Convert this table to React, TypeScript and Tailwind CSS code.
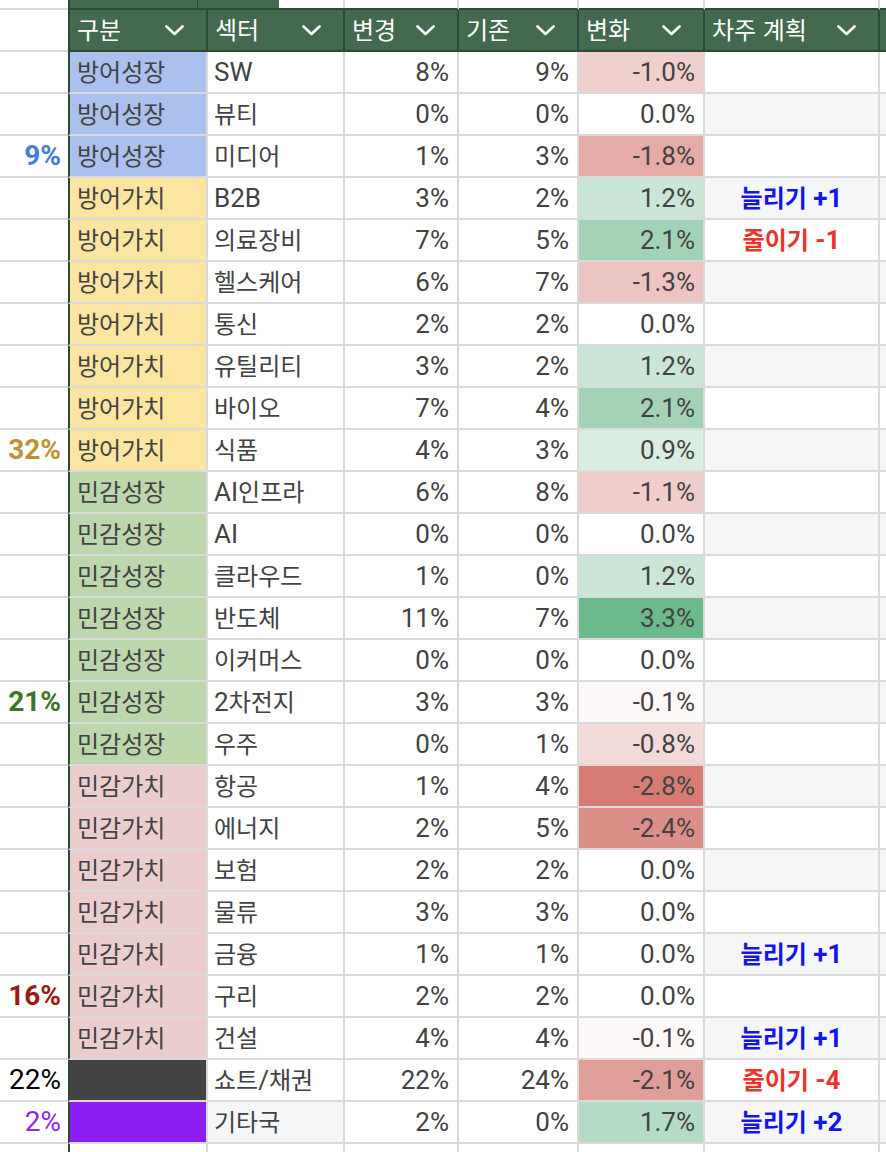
import React from "react";

type Row = {
    group: string;
    sector: string;
    now: string;
    prev: string;
    diff: string;
    diffBg: string;
    plan?: "up" | "down";
    planText?: string;
    left?: string;
    leftClass?: string;
    sectorBg?: string;
};

const GROUP_BG: Record<string, string> = {
    방어성장: "bg-[#a9c1ec]",
    방어가치: "bg-[#fce5a1]",
    민감성장: "bg-[#bcd7ac]",
    민감가치: "bg-[#eccdce]",
    short: "bg-[#434343]",
    etc: "bg-[#8b1cf2]",
};

const ROWS: Row[] = [
    { group: "방어성장", sector: "SW", now: "8%", prev: "9%", diff: "-1.0%", diffBg: "bg-[#f0d0cd]" },
    { group: "방어성장", sector: "뷰티", now: "0%", prev: "0%", diff: "0.0%", diffBg: "bg-white" },
    { group: "방어성장", sector: "미디어", now: "1%", prev: "3%", diff: "-1.8%", diffBg: "bg-[#e5aba5]", left: "9%", leftClass: "font-bold text-[#4a7bd6]" },
    { group: "방어가치", sector: "B2B", now: "3%", prev: "2%", diff: "1.2%", diffBg: "bg-[#cae6d7]", plan: "up", planText: "늘리기 +1" },
    { group: "방어가치", sector: "의료장비", now: "7%", prev: "5%", diff: "2.1%", diffBg: "bg-[#a2d3b6]", plan: "down", planText: "줄이기 -1" },
    { group: "방어가치", sector: "헬스케어", now: "6%", prev: "7%", diff: "-1.3%", diffBg: "bg-[#ecc4c1]" },
    { group: "방어가치", sector: "통신", now: "2%", prev: "2%", diff: "0.0%", diffBg: "bg-white" },
    { group: "방어가치", sector: "유틸리티", now: "3%", prev: "2%", diff: "1.2%", diffBg: "bg-[#cae6d7]" },
    { group: "방어가치", sector: "바이오", now: "7%", prev: "4%", diff: "2.1%", diffBg: "bg-[#a2d3b6]" },
    { group: "방어가치", sector: "식품", now: "4%", prev: "3%", diff: "0.9%", diffBg: "bg-[#d9ede1]", left: "32%", leftClass: "font-bold text-[#bf9131]" },
    { group: "민감성장", sector: "AI인프라", now: "6%", prev: "8%", diff: "-1.1%", diffBg: "bg-[#efcdca]" },
    { group: "민감성장", sector: "AI", now: "0%", prev: "0%", diff: "0.0%", diffBg: "bg-white" },
    { group: "민감성장", sector: "클라우드", now: "1%", prev: "0%", diff: "1.2%", diffBg: "bg-[#cae6d7]" },
    { group: "민감성장", sector: "반도체", now: "11%", prev: "7%", diff: "3.3%", diffBg: "bg-[#6cba8c]" },
    { group: "민감성장", sector: "이커머스", now: "0%", prev: "0%", diff: "0.0%", diffBg: "bg-white" },
    { group: "민감성장", sector: "2차전지", now: "3%", prev: "3%", diff: "-0.1%", diffBg: "bg-[#fdf9f9]", left: "21%", leftClass: "font-bold text-[#3f7325]" },
    { group: "민감성장", sector: "우주", now: "0%", prev: "1%", diff: "-0.8%", diffBg: "bg-[#f3dad8]" },
    { group: "민감가치", sector: "항공", now: "1%", prev: "4%", diff: "-2.8%", diffBg: "bg-[#d67c73]" },
    { group: "민감가치", sector: "에너지", now: "2%", prev: "5%", diff: "-2.4%", diffBg: "bg-[#dc8f88]" },
    { group: "민감가치", sector: "보험", now: "2%", prev: "2%", diff: "0.0%", diffBg: "bg-white" },
    { group: "민감가치", sector: "물류", now: "3%", prev: "3%", diff: "0.0%", diffBg: "bg-white" },
    { group: "민감가치", sector: "금융", now: "1%", prev: "1%", diff: "0.0%", diffBg: "bg-white", plan: "up", planText: "늘리기 +1" },
    { group: "민감가치", sector: "구리", now: "2%", prev: "2%", diff: "0.0%", diffBg: "bg-white", left: "16%", leftClass: "font-bold text-[#9a1b13]" },
    { group: "민감가치", sector: "건설", now: "4%", prev: "4%", diff: "-0.1%", diffBg: "bg-[#fdf9f9]", plan: "up", planText: "늘리기 +1" },
    { group: "short", sector: "쇼트/채권", now: "22%", prev: "24%", diff: "-2.1%", diffBg: "bg-[#e09e98]", plan: "down", planText: "줄이기 -4", left: "22%", leftClass: "text-black" },
    { group: "etc", sector: "기타국", now: "2%", prev: "0%", diff: "1.7%", diffBg: "bg-[#b3dbc5]", plan: "up", planText: "늘리기 +2", left: "2%", leftClass: "text-[#9226ef]", sectorBg: "bg-[#f5f6f8]" },
];

const HEADERS = ["구분", "섹터", "변경", "기존", "변화", "차주 계획"];

const HANGUL = /([\uAC00-\uD7A3]+)/;

// hangul runs render wider than the sheet's font, so they get their own size
function Txt({ s }: { s: string }) {
    return (
        <span className="whitespace-pre">
            {s.split(HANGUL).map((part, i) =>
                /[\uAC00-\uD7A3]/.test(part) ? (
                    <span key={i} className="text-[24px]">
                        {part}
                    </span>
                ) : (
                    part
                )
            )}
        </span>
    );
}

function Chevron() {
    return (
        <svg width="19" height="11" viewBox="0 0 19 11" fill="none">
            <polyline points="1.5,1.5 9.5,9 17.5,1.5" stroke="white" strokeWidth="2.6" strokeLinecap="round" strokeLinejoin="round" />
        </svg>
    );
}

const cell = "h-[42px] border-b-2 border-[#dadada] flex items-center";

export default function App() {
    return (
        <div className="w-[886px] min-h-[1152px] bg-white overflow-hidden font-['Roboto','Noto_Sans_CJK_KR',sans-serif] text-[26px] text-[#424242]">
            <div className="grid grid-cols-[68px_140px_137px_114px_120px_126px_175px_1fr]">
                {/* partial row above the header */}
                <div className="h-[10px] border-b-2 border-[#dadada]" />
                <div className="h-[10px] col-span-2 flex border-b-2 border-l-2 border-[#2b4a38]">
                    <div className="w-[128px] bg-[#43694f] border-r border-[#2b4a38]" />
                    <div className="w-[81px] bg-[#43694f]" />
                    <div className="flex-1 border-r-2 border-r-[#dadada]" />
                </div>
                <div className="h-[10px] border-b-2 border-r-2 border-[#dadada] border-b-[#2b4a38]" />
                <div className="h-[10px] border-b-2 border-r-2 border-[#dadada] border-b-[#2b4a38]" />
                <div className="h-[10px] border-b-2 border-r-2 border-[#dadada] border-b-[#2b4a38]" />
                <div className="h-[10px] border-b-2 border-r-2 border-[#dadada] border-b-[#2b4a38]" />
                <div className="h-[10px] border-b-2 border-[#2b4a38]" />

                {/* header */}
                <div className={cell} />
                {HEADERS.map((h, i) => (
                    <div
                        key={h}
                        className={`h-[42px] flex items-center justify-between bg-[#43694f] text-white border-b-2 border-r-2 border-[#2b4a38] pl-[7px] pr-[22px] ${
                            i === 0 ? "border-l-2" : ""
                        }`}
                    >
                        <Txt s={h} />
                        <Chevron />
                    </div>
                ))}
                <div className="h-[42px] bg-[#43694f] border-b-2 border-[#2b4a38]" />

                {ROWS.map((r, i) => {
                    const band = i % 2 === 1 ? "bg-[#f5f6f8]" : "bg-white";
                    const named = r.group !== "short" && r.group !== "etc";
                    return (
                        <React.Fragment key={r.sector}>
                            <div className={`${cell} justify-end pr-[7px] text-[28px] ${r.leftClass ?? ""}`}>
                                {r.left}
                            </div>
                            <div
                                className={`${cell} border-r-2 border-l-2 border-l-[#2b4a38] pl-[7px] ${GROUP_BG[r.group]}`}
                            >
                                {named ? <Txt s={r.group} /> : null}
                            </div>
                            <div className={`${cell} border-r-2 pl-[6px] ${r.sectorBg ?? "bg-white"}`}>
                                <Txt s={r.sector} />
                            </div>
                            <div className={`${cell} border-r-2 justify-end pr-[8px]`}>{r.now}</div>
                            <div className={`${cell} border-r-2 justify-end pr-[8px]`}>{r.prev}</div>
                            <div className={`${cell} border-r-2 justify-end pr-[8px] ${r.diffBg}`}>{r.diff}</div>
                            <div
                                className={`${cell} border-r-2 justify-center font-bold ${band} ${
                                    r.plan === "up" ? "text-[#1414ef]" : "text-[#e8352b]"
                                }`}
                            >
                                {r.planText ? <Txt s={r.planText} /> : null}
                            </div>
                            <div className={`${cell} ${band}`} />
                        </React.Fragment>
                    );
                })}

                {/* empty row below the table */}
                <div className={cell} />
                <div className={`${cell} border-r-2 border-l-2 border-l-[#2b4a38]`} />
                <div className={`${cell} border-r-2`} />
                <div className={`${cell} border-r-2`} />
                <div className={`${cell} border-r-2`} />
                <div className={`${cell} border-r-2`} />
                <div className={`${cell} border-r-2`} />
                <div className={cell} />
            </div>
        </div>
    );
}
